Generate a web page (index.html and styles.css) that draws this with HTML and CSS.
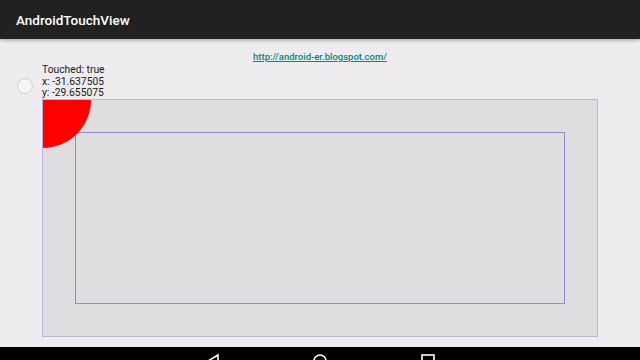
FILE: index.html
```html
<!DOCTYPE html>
<html lang="en">
<head>
  <meta charset="UTF-8">
  <title>AndroidTouchView</title>
  <link rel="stylesheet" href="styles.css">
</head>
<body>

  <div class="toolbar">
    <h1>AndroidTouchView</h1>
  </div>

  <div class="content">
    <div class="link-row">
      <a href="#">http://android-er.blogspot.com/</a>
    </div>

    <div class="touch-row">
      <div class="radio"></div>
      <div class="touch-col">
        <div class="info">
          <div>Touched: true</div>
          <div>x: -31.637505</div>
          <div>y: -29.655075</div>
        </div>
        <div class="touch-view">
          <div class="touch-dot"></div>
          <div class="inner-rect"></div>
        </div>
      </div>
    </div>
  </div>

  <div class="navbar">
    <svg class="nav-back" width="16" height="16" viewBox="0 0 16 16">
      <path d="M13 2 L3 8 L13 14 Z" fill="none" stroke="#fff" stroke-width="1.6"/>
    </svg>
    <svg class="nav-home" width="16" height="16" viewBox="0 0 16 16">
      <circle cx="8" cy="8" r="6" fill="none" stroke="#fff" stroke-width="1.6"/>
    </svg>
    <svg class="nav-recent" width="16" height="16" viewBox="0 0 16 16">
      <rect x="2" y="2" width="12" height="12" fill="none" stroke="#fff" stroke-width="1.6"/>
    </svg>
  </div>

</body>
</html>
```

FILE: styles.css
```css
body {
  margin: 0;
  width: 640px;
  height: 360px;
  overflow: hidden;
  font-family: Roboto, "Noto Sans", sans-serif;
  background: #eeecef;
  color: #222;
  display: flex;
  flex-direction: column;
}

.toolbar {
  height: 39px;
  background: #212121;
  box-shadow: 0 1px 4px rgba(0, 0, 0, 0.35);
  display: flex;
  align-items: center;
  padding-left: 16px;
  position: relative;
  z-index: 1;
}

.toolbar h1 {
  margin: 0;
  font-size: 13.5px;
  font-weight: 500;
  color: #fff;
}

.content {
  flex: 1;
  display: flex;
  flex-direction: column;
}

.link-row {
  text-align: center;
  padding-top: 6px;
  height: 15px;
}

.link-row a {
  font-size: 9.5px;
  font-weight: 500;
  color: #00897b;
  line-height: 12px;
}

.touch-row {
  display: flex;
  padding-left: 17px;
}

.radio {
  width: 14px;
  height: 14px;
  border: 1px solid #d0cfd3;
  border-radius: 50%;
  background: #f6f6f7;
  margin-top: 18px;
  margin-right: 9px;
}

.touch-col {
  display: flex;
  flex-direction: column;
}

.info {
  font-size: 10.3px;
  line-height: 11.5px;
  padding-top: 4px;
  color: #1a1a1a;
}

.touch-view {
  width: 554px;
  height: 236px;
  border: 1px solid #b8b5df;
  background: #dfdde0;
  overflow: hidden;
  position: relative;
}

.touch-dot {
  position: absolute;
  left: -48px;
  top: -48px;
  width: 96px;
  height: 96px;
  border-radius: 50%;
  background: #ff0000;
}

.inner-rect {
  margin: 32px 0 0 32px;
  width: 488px;
  height: 170px;
  border: 1px solid #8e8bd0;
}

.navbar {
  height: 13px;
  background: #000;
  display: flex;
  overflow: hidden;
  padding-top: 6px;
  box-sizing: border-box;
}

.nav-back {
  margin-left: 205px;
}

.nav-home {
  margin-left: 91px;
}

.nav-recent {
  margin-left: 92px;
}
```
